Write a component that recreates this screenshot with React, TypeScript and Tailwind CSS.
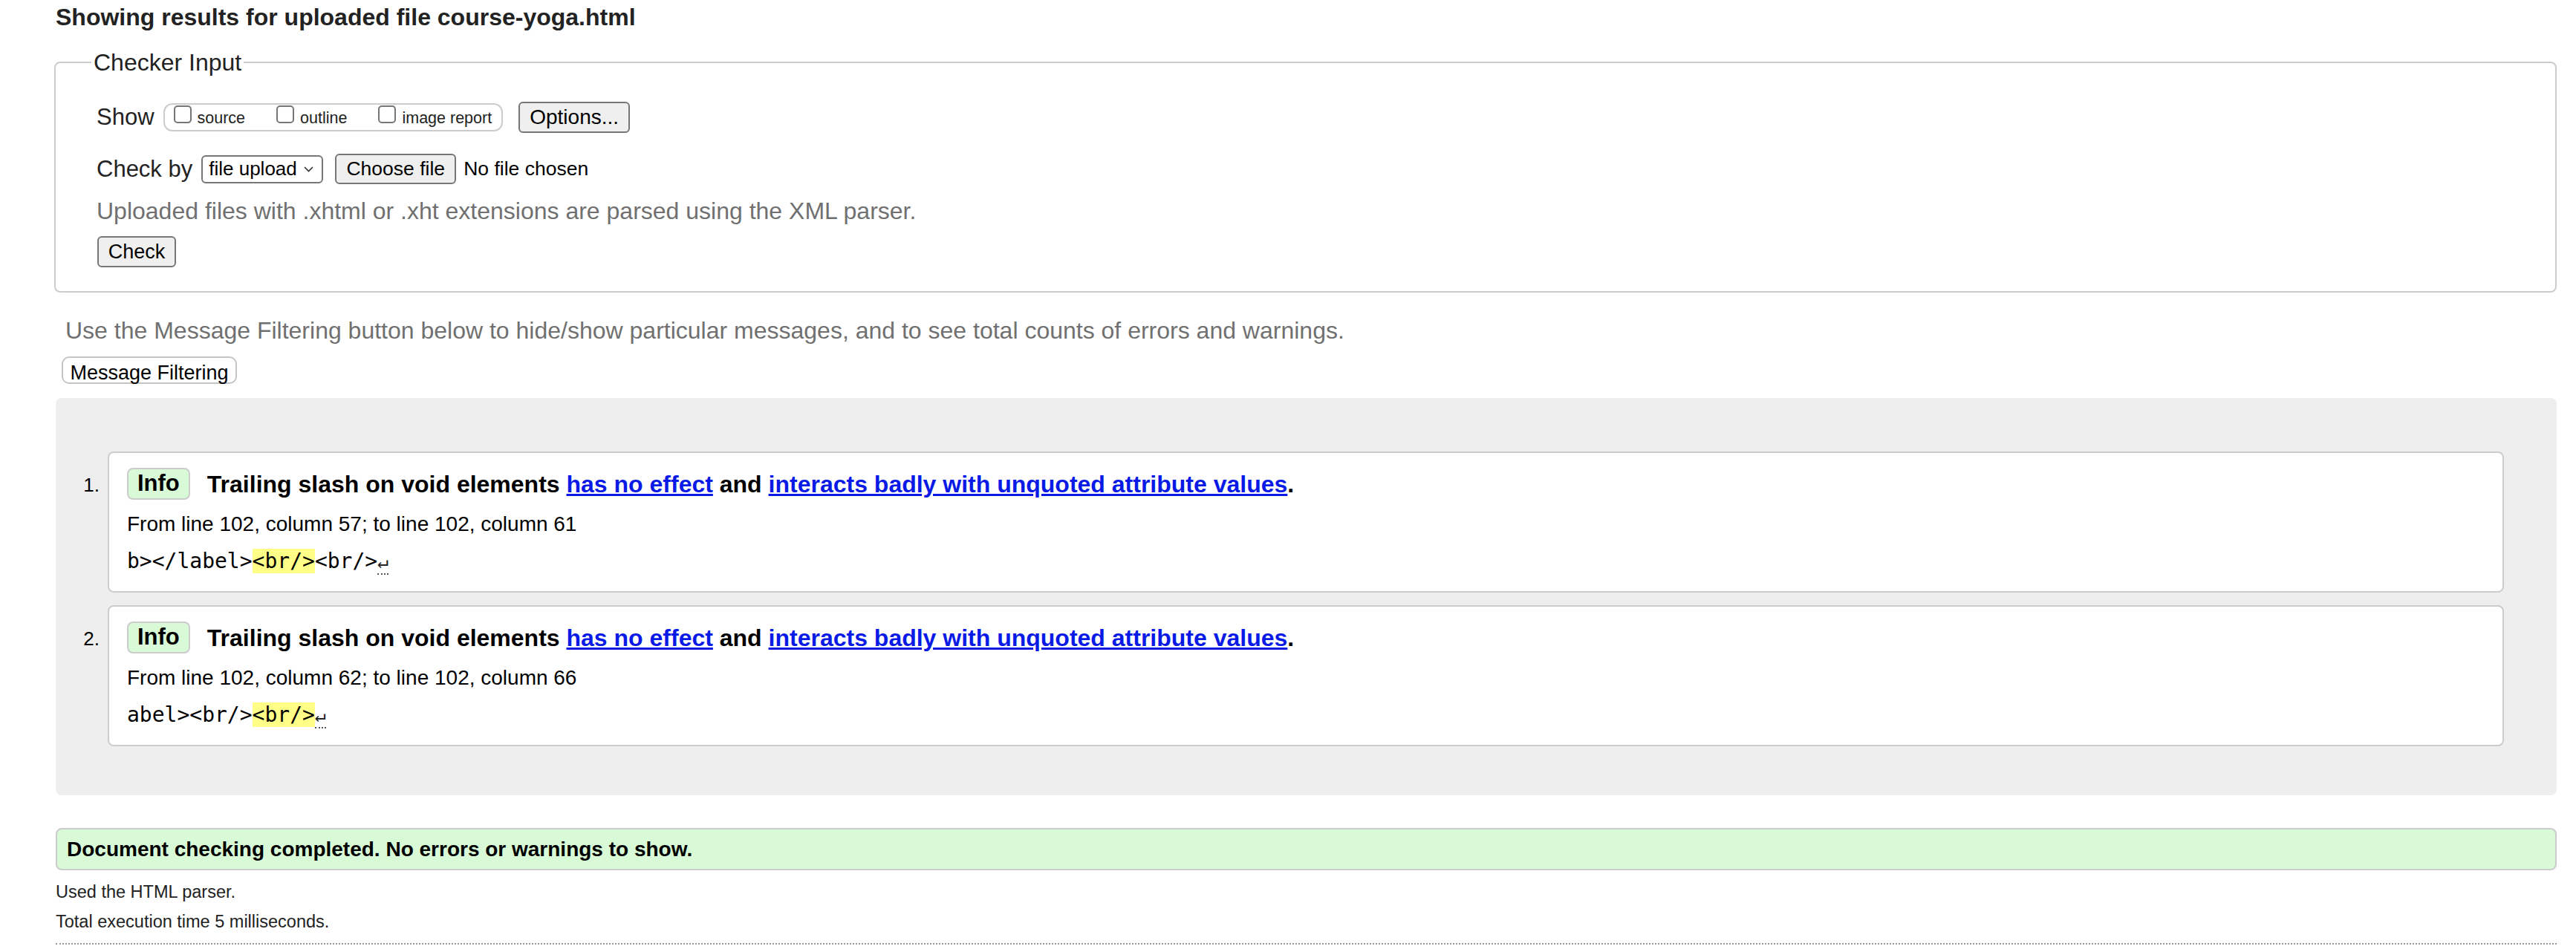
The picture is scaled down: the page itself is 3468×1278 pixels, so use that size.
import React from "react";

type Message = {
  from: string;
  before: string;
  mark: string;
  after: string;
};

const messages: Message[] = [
  {
    from: "From line 102, column 57; to line 102, column 61",
    before: "b></label>",
    mark: "<br/>",
    after: "<br/>",
  },
  {
    from: "From line 102, column 62; to line 102, column 66",
    before: "abel><br/>",
    mark: "<br/>",
    after: "",
  },
];

function Checkbox({ label }: { label: string }) {
  return (
    <label className="flex items-start">
      <span className="block w-[24px] h-[24px] border-2 border-[#767676] rounded-[5px] bg-white" />
      <span className="ml-[8px] mt-[5px] text-[21.5px] leading-[24px]">{label}</span>
    </label>
  );
}

function GrayButton({ children, className }: { children: React.ReactNode; className: string }) {
  return (
    <button
      type="button"
      className={`flex items-center justify-center bg-[#efefef] border-2 border-[#767676] rounded-[6px] text-black ${className}`}
    >
      {children}
    </button>
  );
}

export default function App() {
  return (
    <div className="min-h-screen bg-white text-[#222] font-['Liberation_Sans',Arial,sans-serif] pl-[75px] pr-[26px]">
      <h2 className="pt-[3px] text-[32px] leading-[40px] font-bold">
        Showing results for uploaded file course-yoga.html
      </h2>

      {/* checker form */}
      <fieldset className="-ml-[2px] mt-[23px] border-2 border-[#ccc] rounded-[8px] pl-[55px] pt-[35px] pb-[32px]">
        <legend className="-ml-[7px] px-[3px] text-[32px] leading-[36px]">Checker Input</legend>

        <div className="flex items-center h-[42px]">
          <span className="text-[31px] leading-[36px]">Show</span>
          <div className="ml-[12px] flex items-start h-[38px] pt-[1px] pl-[12px] pr-[13px] gap-[42px] border-2 border-[#ccc] rounded-[12px]">
            <Checkbox label="source" />
            <Checkbox label="outline" />
            <Checkbox label="image report" />
          </div>
          <GrayButton className="ml-[21px] h-[42px] w-[150px] text-[28px]">Options...</GrayButton>
        </div>

        <div className="mt-[28px] flex items-center h-[41px]">
          <span className="text-[31px] leading-[36px]">Check by</span>
          <div className="ml-[12px] flex items-center justify-between h-[38px] w-[164px] pl-[8px] pr-[11px] border-2 border-[#767676] rounded-[6px] bg-white text-black text-[26px]">
            <span>file upload</span>
            <svg width="13" height="8" viewBox="0 0 13 8" fill="none">
              <polyline points="1,1 6.5,6.5 12,1" stroke="#333" strokeWidth="1.6" />
            </svg>
          </div>
          <GrayButton className="ml-[16px] h-[41px] w-[163px] text-[26.5px]">Choose file</GrayButton>
          <span className="ml-[10px] text-[26.5px] text-black">No file chosen</span>
        </div>

        <p className="mt-[16px] text-[32px] leading-[40px] text-[#707070]">
          Uploaded files with .xhtml or .xht extensions are parsed using the XML parser.
        </p>

        <GrayButton className="mt-[14px] ml-[1px] h-[42px] w-[106px] text-[27px]">Check</GrayButton>
      </fieldset>

      <p className="mt-[31px] ml-[13px] text-[32px] leading-[40px] text-[#707070]">
        Use the Message Filtering button below to hide/show particular messages, and to see total counts of errors and
        warnings.
      </p>
      <button
        type="button"
        className="mt-[15px] ml-[8px] h-[37px] w-[236px] bg-white border-2 border-[#c4c4c4] rounded-[10px] text-[27px] text-black"
      >
        Message Filtering
      </button>

      {/* results */}
      <ol className="mt-[18px] bg-[#eeeeee] rounded-[8px] pt-[72px] pb-[66px] pr-[71px] flex flex-col gap-[17px]">
        {messages.map((m, i) => (
          <li key={i} className="flex">
            <div className="w-[70px] shrink-0 pr-[11px] pt-[24px] text-right text-[26px] leading-[43px] text-black">
              {i + 1}.
            </div>
            <div className="flex-1 bg-white border-2 border-[#ccc] rounded-[8px] pt-[20px] pl-[24px] pb-[21px] text-black">
              <div className="flex items-center h-[43px]">
                <span className="flex items-center h-[43px] px-[12px] border-2 border-[#ccc] rounded-[8px] bg-[#d8fad6] font-bold text-[31px]">
                  Info
                </span>
                <span className="ml-[23px] font-bold text-[32px]">
                  Trailing slash on void elements{" "}
                  <a href="#" className="text-[#0a1ae6] underline">
                    has no effect
                  </a>{" "}
                  and{" "}
                  <a href="#" className="text-[#0a1ae6] underline">
                    interacts badly with unquoted attribute values
                  </a>
                  .
                </span>
              </div>
              <p className="mt-[15px] text-[28px] leading-[36px]">{m.from}</p>
              <p className="mt-[14px] font-['DejaVu_Sans_Mono',monospace] text-[28px] leading-[36px]">
                {m.before}
                <span className="bg-[#ffff88]">{m.mark}</span>
                {m.after}
                <span className="border-b-2 border-dotted border-[#555]">
                  <span className="text-[25px] text-[#222]">↵</span>
                </span>
              </p>
            </div>
          </li>
        ))}
      </ol>

      <div className="mt-[44px] h-[57px] flex items-center pl-[13px] bg-[#d8fad6] border-2 border-[#ccc] rounded-[8px] font-bold text-[28px] text-black">
        Document checking completed. No errors or warnings to show.
      </div>

      <p className="mt-[9px] text-[23.5px] leading-[40px]">Used the HTML parser.</p>
      <p className="text-[23.5px] leading-[40px]">Total execution time 5 milliseconds.</p>
      <div className="mt-[9px] border-t-2 border-dotted border-[#999]" />
    </div>
  );
}
